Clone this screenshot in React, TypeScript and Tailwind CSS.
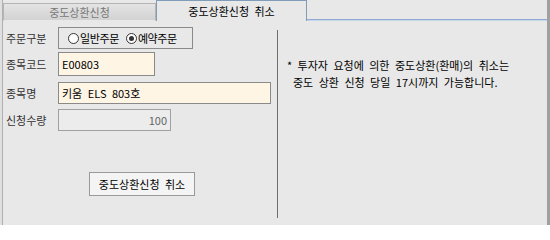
import * as React from 'react'

const FONT = { fontFamily: '"Noto Sans CJK KR", "Noto Sans", sans-serif' }

// ============================================================================
// Pieces
// ============================================================================

function Label({ children }: { children: React.ReactNode }) {
  return <span className="w-[52px] shrink-0 text-[11px] text-[#333]">{children}</span>
}

function Radio({ checked, label }: { checked?: boolean; label: string }) {
  return (
    <span className="flex items-center gap-[1px]">
      <span className="w-[11px] h-[11px] rounded-full border border-[#333] bg-white flex items-center justify-center">
        {checked && <span className="w-[5px] h-[5px] rounded-full bg-[#333]" />}
      </span>
      <span className="text-[11px] tracking-[-0.4px] text-black">{label}</span>
    </span>
  )
}

function Tabs() {
  return (
    <div className="flex items-end h-[21px] shrink-0">
      <div className="ml-[3px] w-[153px] h-[18px] flex items-center justify-center border border-[#b4b4b4] border-b-[#e8e8e8] bg-gradient-to-b from-[#e4e4e4] to-[#d2d2d2] text-[11px] text-[#777]">
        중도상환신청
      </div>
      <div className="w-[151px] h-[21px] flex items-center justify-center border border-b-0 border-[#7f9db9] bg-[#e8e8e8] text-[11px] text-black [word-spacing:3px]">
        중도상환신청 취소
      </div>
      <div className="flex-1 h-[2px] bg-[#8fabd3] border-b border-[#c8d6ea]" />
    </div>
  )
}

// ============================================================================
// App
// ============================================================================

export default function App() {
  return (
    <div style={FONT} className="w-[550px] h-[225px] bg-[#e8e8e8] flex overflow-hidden">
      <div className="w-[3px] h-full border-r border-[#b0b0b0] bg-[#e0e0e0]" />
      <div className="flex-1 flex flex-col -ml-[3px]">
        <Tabs />
        <div className="flex flex-1 min-h-0">
          {/* Form column */}
          <div className="w-[277px] shrink-0 flex flex-col pl-[6px] pt-[6px]">
            <div className="flex items-center h-[22px]">
              <Label>주문구분</Label>
              <div className="w-[135px] h-[22px] border border-[#8a8a8a] flex items-center gap-[7px] pl-[9px]">
                <Radio label="일반주문" />
                <Radio checked label="예약주문" />
              </div>
            </div>
            <div className="flex items-center h-[24px] mt-[3px]">
              <Label>종목코드</Label>
              <div className="w-[97px] h-[24px] border border-[#8a8a8a] bg-[#fff5e4] flex items-center pl-[3px] text-[11px] text-black">
                E00803
              </div>
            </div>
            <div className="flex items-center h-[22px] mt-[6px]">
              <Label>종목명</Label>
              <div className="w-[213px] h-[22px] border border-[#8a8a8a] bg-[#fff5e4] flex items-center pl-[3px] text-[11px] text-black [word-spacing:3px]">
                키움 ELS 803호
              </div>
            </div>
            <div className="flex items-center h-[22px] mt-[5px]">
              <Label>신청수량</Label>
              <div className="w-[113px] h-[22px] border border-[#a0a0a0] bg-[#ececec] flex items-center justify-end pr-[3px] text-[11px] text-[#666]">
                100
              </div>
            </div>
            <div className="flex pl-[83px] mt-[41px]">
              <button className="w-[106px] h-[24px] border border-[#9a9a9a] bg-[#f4f4f4] text-[11px] text-black [word-spacing:3px]">
                중도상환신청 취소
              </button>
            </div>
          </div>

          {/* Separator */}
          <div className="w-[1px] mt-[9px] mb-[7px] bg-[#6e6e6e]" />

          {/* Notice */}
          <div className="flex-1 pl-[9px] pt-[36px] text-[11px] leading-[17px] text-black [word-spacing:3px]">
            <p>* 투자자 요청에 의한 중도상환(환매)의 취소는</p>
            <p className="pl-[6px]">중도 상환 신청 당일 17시까지 가능합니다.</p>
          </div>
        </div>
      </div>
      <div className="w-[3px] h-full bg-[#a0a0a0]" />
    </div>
  )
}
